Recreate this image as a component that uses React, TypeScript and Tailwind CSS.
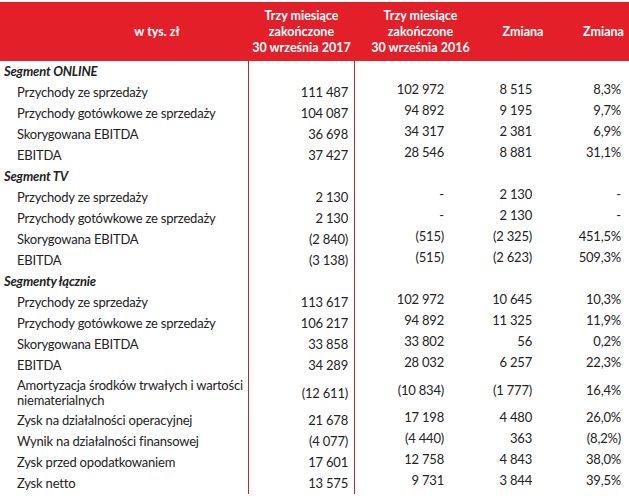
import React from "react";

type Row =
  | { kind: "section"; label: string }
  | { kind: "data"; label: React.ReactNode; v: [string, string, string, string]; tall?: boolean };

const rows: Row[] = [
  { kind: "section", label: "Segment ONLINE" },
  { kind: "data", label: "Przychody ze sprzedaży", v: ["111 487", "102 972", "8 515", "8,3%"] },
  { kind: "data", label: "Przychody gotówkowe ze sprzedaży", v: ["104 087", "94 892", "9 195", "9,7%"] },
  { kind: "data", label: "Skorygowana EBITDA", v: ["36 698", "34 317", "2 381", "6,9%"] },
  { kind: "data", label: "EBITDA", v: ["37 427", "28 546", "8 881", "31,1%"] },
  { kind: "section", label: "Segment TV" },
  { kind: "data", label: "Przychody ze sprzedaży", v: ["2 130", "-", "2 130", "-"] },
  { kind: "data", label: "Przychody gotówkowe ze sprzedaży", v: ["2 130", "-", "2 130", "-"] },
  { kind: "data", label: "Skorygowana EBITDA", v: ["(2 840)", "(515)", "(2 325)", "451,5%"] },
  { kind: "data", label: "EBITDA", v: ["(3 138)", "(515)", "(2 623)", "509,3%"] },
  { kind: "section", label: "Segmenty łącznie" },
  { kind: "data", label: "Przychody ze sprzedaży", v: ["113 617", "102 972", "10 645", "10,3%"] },
  { kind: "data", label: "Przychody gotówkowe ze sprzedaży", v: ["106 217", "94 892", "11 325", "11,9%"] },
  { kind: "data", label: "Skorygowana EBITDA", v: ["33 858", "33 802", "56", "0,2%"] },
  { kind: "data", label: "EBITDA", v: ["34 289", "28 032", "6 257", "22,3%"] },
  {
    kind: "data",
    label: (
      <>
        Amortyzacja środków trwałych i wartości
        <br />
        niematerialnych
      </>
    ),
    v: ["(12 611)", "(10 834)", "(1 777)", "16,4%"],
    tall: true,
  },
  { kind: "data", label: "Zysk na działalności operacyjnej", v: ["21 678", "17 198", "4 480", "26,0%"] },
  { kind: "data", label: "Wynik na działalności finansowej", v: ["(4 077)", "(4 440)", "363", "(8,2%)"] },
  { kind: "data", label: "Zysk przed opodatkowaniem", v: ["17 601", "12 758", "4 843", "38,0%"] },
  { kind: "data", label: "Zysk netto", v: ["13 575", "9 731", "3 844", "39,5%"] },
];

export default function App() {
  return (
    <div
      className="w-[629px] h-[498px] bg-white text-[#222222] overflow-hidden pt-[2px]"
      style={{ fontFamily: 'Lato, "Open Sans", sans-serif' }}
    >
      {/* header */}
      <div className="grid grid-cols-[248px_107px_133px_70px_71px] h-[59px] bg-[#e3202a] text-white font-bold text-[12.5px] leading-[16px]">
        <div className="flex items-center justify-center pl-[66px]">w tys. zł</div>
        <div className="flex items-center justify-center text-center">
          Trzy miesiące
          <br />
          zakończone
          <br />
          30 września 2017
        </div>
        <div className="flex items-center justify-center text-center pr-[2px]">
          Trzy miesiące
          <br />
          zakończone
          <br />
          30 września 2016
        </div>
        <div className="flex items-center justify-center">Zmiana</div>
        <div className="flex items-center justify-center pl-[20px]">Zmiana</div>
      </div>
      {/* body */}
      <div className="grid grid-cols-[248px_107px_133px_70px_71px] text-[13px] leading-[15px] tracking-[-0.2px]">
        {rows.map((r, i) => {
          if (r.kind === "section") {
            return (
              <React.Fragment key={i}>
                <div className="h-[21px] flex items-center pl-[4px] font-bold italic whitespace-nowrap">{r.label}</div>
                <div className="border-x border-[#c4262e]" />
                <div />
                <div />
                <div />
              </React.Fragment>
            );
          }
          const h = r.tall ? "h-[34px]" : "h-[21px]";
          return (
            <React.Fragment key={i}>
              <div className={`${h} flex items-center pl-[17px] whitespace-nowrap`}>
                <span>{r.label}</span>
              </div>
              <div className={`${h} flex items-center justify-end pr-[6px] border-x border-[#c4262e]`}>{r.v[0]}</div>
              <div className={`${h} flex items-center justify-end pr-[44px] pb-[6px]`}>{r.v[1]}</div>
              <div className={`${h} flex items-center justify-end pr-[26px] pb-[6px]`}>{r.v[2]}</div>
              <div className={`${h} flex items-center justify-end pr-[8px] pb-[6px]`}>{r.v[3]}</div>
            </React.Fragment>
          );
        })}
      </div>
    </div>
  );
}
